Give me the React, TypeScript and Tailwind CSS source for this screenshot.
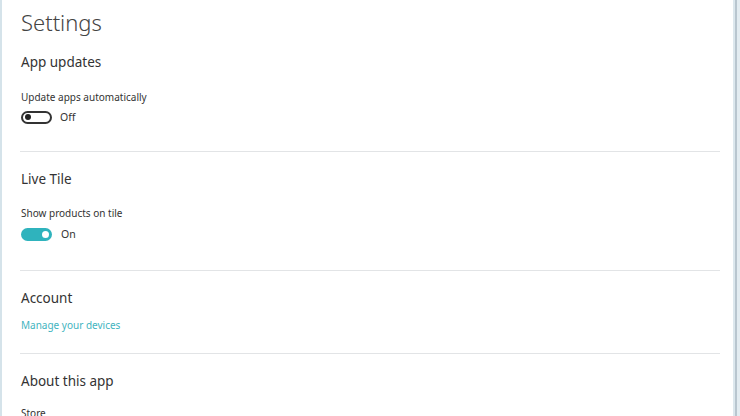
import React from "react";

const font = { fontFamily: '"Noto Sans", "Open Sans", sans-serif' };

function ToggleOff() {
  return (
    <div className="flex items-center h-[20px]">
      <div className="w-[31px] h-[13px] rounded-full border-2 border-[#333] flex items-center pl-[2px]">
        <div className="w-[6px] h-[6px] rounded-full bg-[#222]" />
      </div>
      <span className="ml-[8px] text-[10.5px] text-[#333] leading-[20px]">Off</span>
    </div>
  );
}

function ToggleOn() {
  return (
    <div className="flex items-center h-[20px]">
      <div className="w-[31px] h-[13px] rounded-full bg-[#2fb3bd] flex items-center justify-end pr-[3px]">
        <div className="w-[7px] h-[7px] rounded-full bg-white" />
      </div>
      <span className="ml-[9px] text-[10.5px] text-[#333] leading-[20px]">On</span>
    </div>
  );
}

export default function App() {
  return (
    <div className="w-[740px] h-[416px] overflow-hidden bg-white flex" style={font}>
      <div className="w-[2px] bg-[#d5e3ea]" />
      <div className="flex-1 pl-[19px] pr-[13px]">
        <div className="mt-[6px] h-[32px] leading-[32px] text-[22px] font-light text-[#444]">Settings</div>

        <div className="mt-[14px] h-[20px] leading-[20px] text-[13.5px] text-[#333]">App updates</div>
        <div className="mt-[18px] h-[14px] leading-[14px] text-[10px] text-[#333]">Update apps automatically</div>
        <div className="mt-[3px]"><ToggleOff /></div>
        <div className="mt-[24px] -ml-px h-px bg-[#e2e4e6]" />

        <div className="mt-[17px] h-[20px] leading-[20px] text-[13.5px] text-[#333]">Live Tile</div>
        <div className="mt-[17px] h-[14px] leading-[14px] text-[10px] text-[#333]">Show products on tile</div>
        <div className="mt-[4px]"><ToggleOn /></div>
        <div className="mt-[26px] -ml-px h-px bg-[#e2e4e6]" />

        <div className="mt-[17px] h-[20px] leading-[20px] text-[13.5px] text-[#333]">Account</div>
        <div className="mt-[10px] h-[14px] leading-[14px] text-[10px] text-[#3fb4c0]">Manage your devices</div>
        <div className="mt-[21px] -ml-px h-px bg-[#e2e4e6]" />

        <div className="mt-[17px] h-[20px] leading-[20px] text-[13.5px] text-[#333]">About this app</div>
        <div className="mt-[15px] h-[14px] leading-[14px] text-[10px] text-[#333]">Store</div>
      </div>
      <div className="w-[7px] flex">
        <div className="w-[2px] bg-[#dde8ee]" />
        <div className="w-[2px] bg-[#b9c6cf]" />
        <div className="w-[3px] bg-[#e3ecf1]" />
      </div>
    </div>
  );
}
